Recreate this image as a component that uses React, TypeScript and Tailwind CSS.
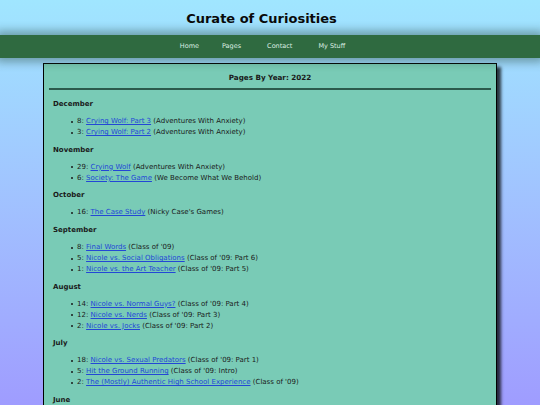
const font = { fontFamily: '"DejaVu Sans", Verdana, sans-serif' };

type Entry = { day: number; title: string; note: string };
type Month = { name: string; entries: Entry[] };

const months: Month[] = [
  {
    name: "December",
    entries: [
      { day: 8, title: "Crying Wolf: Part 3", note: "(Adventures With Anxiety)" },
      { day: 3, title: "Crying Wolf: Part 2", note: "(Adventures With Anxiety)" },
    ],
  },
  {
    name: "November",
    entries: [
      { day: 29, title: "Crying Wolf", note: "(Adventures With Anxiety)" },
      { day: 6, title: "Society: The Game", note: "(We Become What We Behold)" },
    ],
  },
  {
    name: "October",
    entries: [{ day: 16, title: "The Case Study", note: "(Nicky Case's Games)" }],
  },
  {
    name: "September",
    entries: [
      { day: 8, title: "Final Words", note: "(Class of '09)" },
      { day: 5, title: "Nicole vs. Social Obligations", note: "(Class of '09: Part 6)" },
      { day: 1, title: "Nicole vs. the Art Teacher", note: "(Class of '09: Part 5)" },
    ],
  },
  {
    name: "August",
    entries: [
      { day: 14, title: "Nicole vs. Normal Guys?", note: "(Class of '09: Part 4)" },
      { day: 12, title: "Nicole vs. Nerds", note: "(Class of '09: Part 3)" },
      { day: 2, title: "Nicole vs. Jocks", note: "(Class of '09: Part 2)" },
    ],
  },
  {
    name: "July",
    entries: [
      { day: 18, title: "Nicole vs. Sexual Predators", note: "(Class of '09: Part 1)" },
      { day: 5, title: "Hit the Ground Running", note: "(Class of '09: Intro)" },
      { day: 2, title: "The (Mostly) Authentic High School Experience", note: "(Class of '09)" },
    ],
  },
  {
    name: "June",
    entries: [{ day: 30, title: "Nicole vs. the World", note: "(Class of '09)" }],
  },
];

export default function App() {
  return (
    <div
      className="h-[405px] overflow-hidden w-full bg-gradient-to-b from-[#a0e6ff] to-[#9f9cff] text-[#1a1a1a]"
      style={font}
    >
      <header className="h-[35px] flex items-center justify-center pr-[17px]">
        <h1 className="text-[13px] font-bold leading-none text-[#0a0a0a] pt-[1px]">
          Curate of Curiosities
        </h1>
      </header>
      <nav className="h-[23px] bg-[#2f6a40] shadow-[0_0_10px_4px_rgba(40,70,60,0.45)] flex items-center justify-center gap-[23px] pr-[17px] text-[6.5px] text-[#dcefe2] relative z-10">
        <a className="pl-[2px]">Home</a>
        <a>Pages</a>
        <a className="pl-[3px]">Contact</a>
        <a className="pl-[3px]">My Stuff</a>
      </nav>
      <main className="w-[454px] mx-auto mt-[5px] border-[1.5px] border-black bg-[#79cbb6] shadow-[4px_4px_3px_rgba(0,0,0,0.75)] px-[4px] pb-4">
        <h2 className="text-[7.2px] font-bold text-center leading-[11px] pt-[8px] pb-[5px]">
          Pages By Year: 2022
        </h2>
        <div className="h-[2px] bg-[#2c5a4c] mx-[1px]" />
        <div className="pl-[5px] pt-[9px] text-[7px] leading-[11px]">
          {months.map((m) => (
            <section key={m.name}>
              <h3 className="font-bold mb-[6px]">{m.name}</h3>
              <ul className="mb-[6.7px] pl-[24px]">
                {m.entries.map((e) => (
                  <li key={e.title} className="flex items-center">
                    <span className="w-[2px] h-[2px] rounded-full bg-[#1a1a1a] mr-[4px] -ml-[6px]" />
                    <span>
                      {e.day}:{" "}
                      <a className="text-[#2347d6] underline underline-offset-[1px]">{e.title}</a>{" "}
                      {e.note}
                    </span>
                  </li>
                ))}
              </ul>
            </section>
          ))}
        </div>
      </main>
    </div>
  );
}
